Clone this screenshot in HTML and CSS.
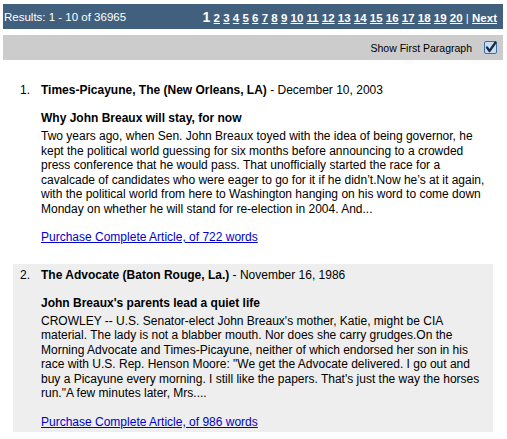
FILE: index.html
```html
<!DOCTYPE html>
<html lang="en">
<head>
    <meta charset="UTF-8">
    <title>Search Results</title>
    <link rel="stylesheet" href="styles.css">
</head>
<body>

<!-- Barra de resultados -->
<div class="topbar">
    <span class="count">Results: 1 - 10 of 36965</span>
    <span class="pages">
        <b class="current">1</b>
        <a href="#">2</a> <a href="#">3</a> <a href="#">4</a> <a href="#">5</a>
        <a href="#">6</a> <a href="#">7</a> <a href="#">8</a> <a href="#">9</a>
        <a href="#">10</a> <a href="#">11</a> <a href="#">12</a> <a href="#">13</a>
        <a href="#">14</a> <a href="#">15</a> <a href="#">16</a> <a href="#">17</a>
        <a href="#">18</a> <a href="#">19</a> <a href="#">20</a>
        <span class="sep">|</span> <a href="#">Next</a>
    </span>
</div>

<div class="options">
    <label for="firstPara">Show First Paragraph</label>
    <span class="check" id="firstPara">
        <svg width="13" height="13" viewBox="0 0 13 13">
            <rect x="0.5" y="0.5" width="12" height="12" rx="1.5" fill="#c9dcf2" stroke="#3d6ea8"/>
            <path d="M3 6.5 L5.5 10 L11.5 1.5" fill="none" stroke="#1b2a44" stroke-width="2.2" stroke-linecap="round" stroke-linejoin="round"/>
        </svg>
    </span>
</div>

<ol class="results">
    <li class="item">
        <span class="num">1.</span>
        <div class="entry">
            <div class="source"><b>Times-Picayune, The (New Orleans, LA)</b> - December 10, 2003</div>
            <div class="headline">Why John Breaux will stay, for now</div>
            <p class="para">Two years ago, when Sen. John Breaux toyed with the idea of being governor, he kept the political world guessing for six months before announcing to a crowded press conference that he would pass. That unofficially started the race for a cavalcade of candidates who were eager to go for it if he didn’t.Now he’s at it again, with the political world from here to Washington hanging on his word to come down Monday on whether he will stand for re-election in 2004. And...</p>
            <a class="buy" href="#">Purchase Complete Article, of 722 words</a>
        </div>
    </li>
    <li class="item alt">
        <span class="num">2.</span>
        <div class="entry">
            <div class="source"><b>The Advocate (Baton Rouge, La.)</b> - November 16, 1986</div>
            <div class="headline">John Breaux's parents lead a quiet life</div>
            <p class="para">CROWLEY -- U.S. Senator-elect John Breaux's mother, Katie, might be CIA material. The lady is not a blabber mouth. Nor does she carry grudges.On the Morning Advocate and Times-Picayune, neither of which endorsed her son in his race with U.S. Rep. Henson Moore: "We get the Advocate delivered. I go out and buy a Picayune every morning. I still like the papers. That's just the way the horses run."A few minutes later, Mrs....</p>
            <a class="buy" href="#">Purchase Complete Article, of 986 words</a>
        </div>
    </li>
</ol>

</body>
</html>
```

FILE: styles.css
```css
        body {
            margin: 4px 4px 0 3px;
            font-family: "Liberation Sans", Arial, Helvetica, sans-serif;
            font-size: 12px;
            color: #000;
            background-color: #fff;
        }

        .topbar {
            background-color: #41607e;
            color: #fff;
            height: 25px;
            display: flex;
            align-items: center;
            justify-content: space-between;
            padding: 0 6px 0 1px;
            font-size: 11.5px;
        }

        .pages a {
            color: #fff;
            font-weight: bold;
        }

        .pages .current {
            font-size: 14px;
        }

        .sep {
            font-weight: normal;
        }

        .options {
            background-color: #ccc;
            height: 25px;
            margin-top: 6px;
            display: flex;
            align-items: center;
            justify-content: flex-end;
            gap: 12px;
            padding-right: 6px;
            font-size: 10.5px;
        }

        .check {
            display: flex;
        }

        .results {
            list-style: none;
            margin: 19px 10px 0;
            padding: 0;
        }

        .item {
            display: flex;
            padding: 4px 4px 3px 0;
            margin-bottom: 16px;
            line-height: 14.5px;
        }

        .item.alt {
            background-color: #eee;
        }

        .num {
            flex: none;
            width: 17px;
            padding-right: 11px;
            text-align: right;
        }

        .headline {
            font-weight: bold;
            margin-top: 13.5px;
        }

        .para {
            margin: 3.5px 0 14px;
        }

        .buy {
            color: #0000cc;
        }
```
